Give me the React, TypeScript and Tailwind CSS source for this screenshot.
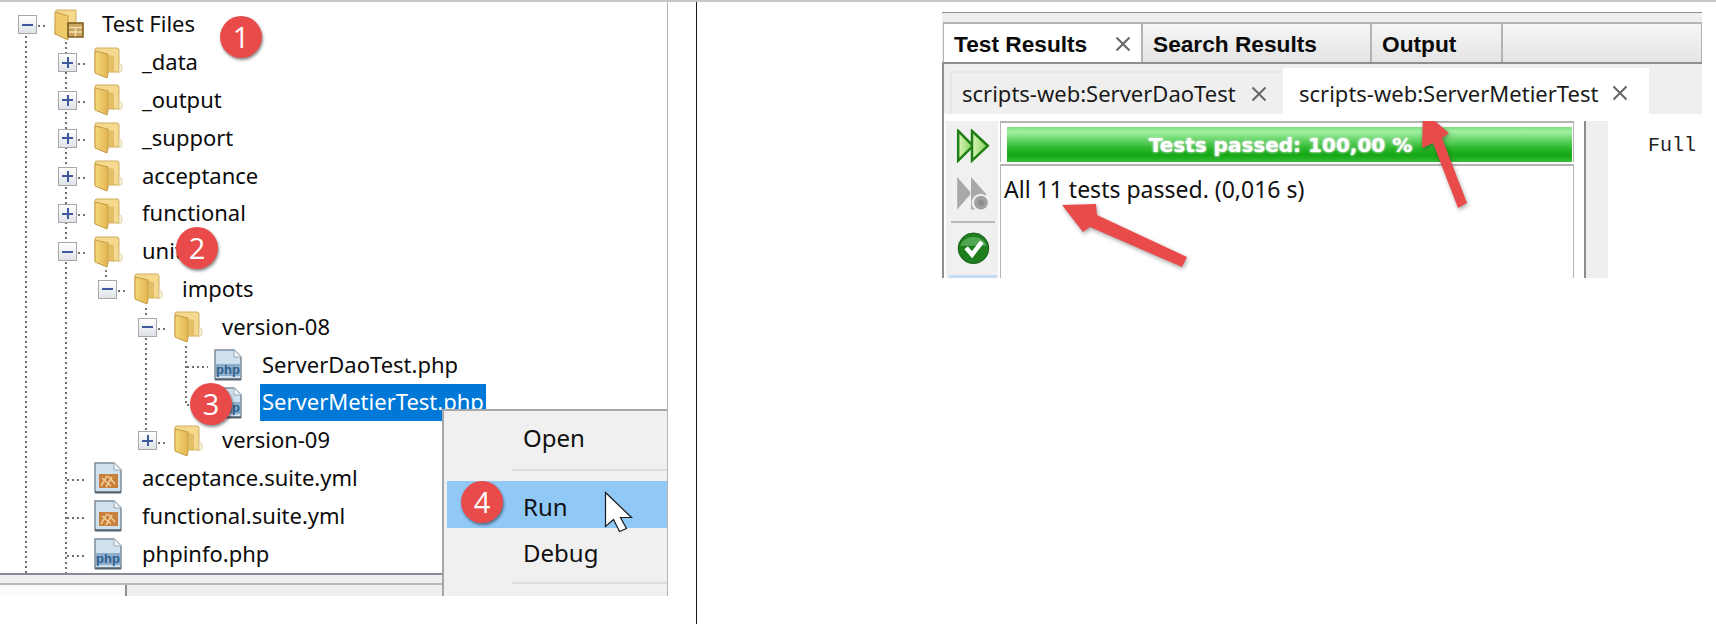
import { useId } from "react"

type TreeRow = {
	label: string
	depth: number
	icon: "root" | "folder" | "php" | "yml"
	expander?: "plus" | "minus"
	selected?: boolean
}

const rows: TreeRow[] = [
	{ label: "Test Files", depth: 0, icon: "root", expander: "minus" },
	{ label: "_data", depth: 1, icon: "folder", expander: "plus" },
	{ label: "_output", depth: 1, icon: "folder", expander: "plus" },
	{ label: "_support", depth: 1, icon: "folder", expander: "plus" },
	{ label: "acceptance", depth: 1, icon: "folder", expander: "plus" },
	{ label: "functional", depth: 1, icon: "folder", expander: "plus" },
	{ label: "unit", depth: 1, icon: "folder", expander: "minus" },
	{ label: "impots", depth: 2, icon: "folder", expander: "minus" },
	{ label: "version-08", depth: 3, icon: "folder", expander: "minus" },
	{ label: "ServerDaoTest.php", depth: 4, icon: "php" },
	{ label: "ServerMetierTest.php", depth: 4, icon: "php", selected: true },
	{ label: "version-09", depth: 3, icon: "folder", expander: "plus" },
	{ label: "acceptance.suite.yml", depth: 1, icon: "yml" },
	{ label: "functional.suite.yml", depth: 1, icon: "yml" },
	{ label: "phpinfo.php", depth: 1, icon: "php" },
]

const depthPadding = ["pl-[18px]", "pl-[58px]", "pl-[98px]", "pl-[138px]", "pl-[178px]"]

function Folder() {
	const id = useId()
	return (
		<svg width="30" height="32" viewBox="0 0 30 32">
			<defs>
				<linearGradient id={id} x1="0" y1="0" x2="1" y2="0">
					<stop offset="0" stopColor="#f6d87c" />
					<stop offset="1" stopColor="#e2b552" />
				</linearGradient>
			</defs>
			<path d="M2 1h21a2 2 0 0 1 2 2v22H1V2z" fill="#f4d98e" stroke="#cfae62" />
			<path d="M25 16l3 3v5l-3 2z" fill="#f8f2dc" stroke="#d8c486" strokeWidth="0.7" />
			<path d="M1 4l13 3v20l-1 4-12-5z" fill={`url(#${id})`} stroke="#c49a42" />
			<path d="M14 8l6 1v16h-6z" fill="#dfb458" opacity="0.75" />
		</svg>
	)
}

function RootFolder() {
	return (
		<svg width="30" height="32" viewBox="0 0 30 32">
			<path d="M2 1h20v24H1z" fill="#f4d98e" stroke="#cfae62" />
			<path d="M1 3l13 4v24l-13-6z" fill="#f0cb6c" stroke="#c49a42" />
			<rect x="14" y="14" width="15" height="14" fill="#c9a560" stroke="#7d5a1c" strokeWidth="1.5" />
			<path d="M15 18.5h13M15 23h13M21.5 18.5v9" stroke="#f1e1b0" strokeWidth="1.5" />
		</svg>
	)
}

function FileIcon({ kind }: { kind: "php" | "yml" }) {
	return (
		<svg width="28" height="32" viewBox="0 0 28 32">
			<path d="M1 1h19l7 7v22H1z" fill="#cfe0ee" stroke="#7d8b99" strokeWidth="1.5" />
			<path d="M20 1v7h7" fill="#f0f4f8" stroke="#9aa8b4" />
			<path d="M1 30.5h26" stroke="#56626e" strokeWidth="2" />
			{kind === "php" ? (
				<>
					<rect x="2" y="15" width="24" height="12" fill="#8eaecb" />
					<text x="14" y="25" textAnchor="middle" fontSize="13" fontWeight="700" fill="#2f5f8f" fontFamily="'Liberation Sans', sans-serif">
						php
					</text>
				</>
			) : (
				<>
					<rect x="5" y="12" width="19" height="14" fill="#c8803a" />
					<path d="M7 24l6-10M12 25l6-10M8 16l9 8M14 14l7 8" stroke="#f0cc98" strokeWidth="1.5" />
				</>
			)}
		</svg>
	)
}

function Expander({ type }: { type: "plus" | "minus" }) {
	return (
		<div className="relative flex h-[19px] w-[19px] items-center justify-center border border-[#a8a8a8] bg-[linear-gradient(#ffffff,#dfe2e8)]">
			<div className="h-[2px] w-[11px] bg-[#3f5a9c]" />
			{type === "plus" ? <div className="absolute h-[11px] w-[2px] bg-[#3f5a9c]" /> : null}
		</div>
	)
}

function Row({ row }: { row: TreeRow }) {
	return (
		<div className={`flex h-[37.8px] items-center ${depthPadding[row.depth]}`}>
			<div className="flex w-[36px] shrink-0">{row.expander ? <Expander type={row.expander} /> : null}</div>
			<div className="flex w-[48px] shrink-0">
				{row.icon === "root" ? <RootFolder /> : row.icon === "folder" ? <Folder /> : <FileIcon kind={row.icon} />}
			</div>
			<span
				className={
					row.selected
						? "flex h-[37px] items-center bg-[#0078d7] px-[2px] pb-[2px] -ml-[2px] text-white"
						: "pb-[2px] text-[#0c0c0c]"
				}
			>
				{row.label}
			</span>
		</div>
	)
}

function TreeLines() {
	const dots = { stroke: "#707070", strokeWidth: 2, strokeDasharray: "2 3" }
	const horizontal = [
		[38, 48, 24],
		[78, 88, 62],
		[78, 88, 100],
		[78, 88, 138],
		[78, 88, 176],
		[78, 88, 213],
		[78, 88, 251],
		[118, 128, 289],
		[158, 168, 327],
		[187, 208, 365],
		[187, 208, 403],
		[158, 168, 441],
		[67, 86, 478],
		[67, 86, 516],
		[67, 86, 554],
	]
	return (
		<svg className="absolute left-0 top-0" width="300" height="574">
			<line x1="26" y1="34" x2="26" y2="572" {...dots} />
			<line x1="66" y1="40" x2="66" y2="572" {...dots} />
			<line x1="106" y1="268" x2="106" y2="280" {...dots} />
			<line x1="146" y1="306" x2="146" y2="440" {...dots} />
			<line x1="186" y1="344" x2="186" y2="403" {...dots} />
			{horizontal.map(([x1, x2, y]) => (
				<line key={`${x1}-${y}`} x1={x1} y1={y} x2={x2} y2={y} {...dots} />
			))}
		</svg>
	)
}

function Badge({ n, className }: { n: number; className: string }) {
	return (
		<div
			className={`absolute flex h-[42px] w-[42px] items-center justify-center rounded-full bg-[#e94b4b] text-[29px] text-white shadow-[1px_2px_3px_rgba(0,0,0,0.45)] font-['Open_Sans',sans-serif] ${className}`}
		>
			{n}
		</div>
	)
}

function ContextMenu() {
	return (
		<div className="absolute left-[442px] top-[407px] flex h-[187px] w-[226px] flex-col border-l-2 border-r border-t-2 border-[#a6a6a6] border-r-[#b4b4b4] bg-[#f0f0f0] text-[24px] text-[#111111] font-['Noto_Sans',sans-serif]">
			<div className="flex h-[58px] items-center pb-[4px] pl-[79px]">Open</div>
			<div className="ml-[68px] h-[2px] bg-[#dcdcdc]" />
			<div className="h-[10px]" />
			<div className="ml-[3px] flex h-[47px] items-center bg-[#90c8f6] pl-[76px] pt-[4px]">Run</div>
			<div className="flex h-[46px] items-center pl-[79px] pt-[3px]">Debug</div>
			<div className="ml-[68px] mt-[8px] h-[2px] bg-[#dcdcdc]" />
		</div>
	)
}

function Cursor() {
	return (
		<svg className="absolute left-[603px] top-[488px]" width="32" height="44" viewBox="0 0 32 44">
			<path d="M2.5 2.5v34l8-7 6 12 7-3-6-11h11z" fill="#ffffff" stroke="#1a1a1a" strokeWidth="1.2" />
		</svg>
	)
}

function RedArrows() {
	return (
		<svg className="absolute -top-[2px] left-0 drop-shadow-[1px_2px_2px_rgba(0,0,0,0.35)]" width="1716" height="624">
			<path d="M1062 205L1096 204L1097 215L1187 257L1182 267L1090 227L1083 232z" fill="#e94b4b" />
			<path d="M1423 111L1449 133L1442 138L1467 203L1458 208L1433 143L1422 148z" fill="#e94b4b" />
		</svg>
	)
}

function CloseX({ className }: { className?: string }) {
	return (
		<svg className={className} width="16" height="16" viewBox="0 0 16 16">
			<path d="M1.5 1.5l13 13M14.5 1.5l-13 13" stroke="#666666" strokeWidth="2" />
		</svg>
	)
}

function ToolbarIcons() {
	const id = useId()
	return (
		<div className="ml-[2px] flex w-[52px] flex-col items-center bg-[#f0f0f0] pl-[2px] pt-[8px]">
			<svg width="34" height="34" viewBox="0 0 34 34">
				<defs>
					<linearGradient id={id} x1="0" y1="0" x2="1" y2="0">
						<stop offset="0" stopColor="#d8f5b8" />
						<stop offset="1" stopColor="#84d054" />
					</linearGradient>
				</defs>
				<path d="M2 2l15 15-15 15z" fill={`url(#${id})`} stroke="#1f7f14" strokeWidth="2.5" />
				<path d="M16 2l16 15-16 15z" fill={`url(#${id})`} stroke="#1f7f14" strokeWidth="2.5" />
			</svg>
			<svg className="mt-[13px]" width="34" height="36" viewBox="0 0 34 36">
				<path d="M1 1l13 15v3l-13 15z" fill="#a8a8a8" />
				<path d="M15 1l15 17v2a8 8 0 0 0-11 14h-4z" fill="#a8a8a8" />
				<circle cx="25" cy="27" r="7" fill="#a0a0a0" />
				<circle cx="25" cy="27" r="3" fill="#8c8c8c" />
			</svg>
			<div className="mt-[10px] h-[2px] w-[44px] bg-[#b8b8b8]" />
			<svg className="mt-[9px]" width="33" height="33" viewBox="0 0 33 33">
				<circle cx="16.5" cy="16.5" r="15.5" fill="#1f7f1f" stroke="#165c16" />
				<path d="M3 14a14 12 0 0 1 27 0z" fill="#66b866" opacity="0.7" />
				<path d="M9 16l6 7 10-13" fill="none" stroke="#ffffff" strokeWidth="4.5" />
			</svg>
			<div className="mt-[10px] h-[3px] w-[48px] bg-[#c6dcf2]" />
		</div>
	)
}

function ResultsPanel() {
	const tabClass =
		"flex h-full shrink-0 items-center justify-between border-x border-t-2 border-[#b4b4b4] bg-[linear-gradient(#f6f6f6,#e4e4e4)] pl-[10px] pr-[10px] pt-[3px]"
	return (
		<div className="ml-[245px] mt-[10px] flex h-[266px] w-[760px] flex-col border-t border-[#8f8f8f] bg-[#efefef]">
			<div className="mt-[9px] flex h-[42px] border-b-2 border-[#8f8f8f] pl-px text-[22.7px] font-bold text-[#0a0a0a] font-['Liberation_Sans',sans-serif]">
				<div className={`${tabClass} w-[199px] bg-none bg-white`}>
					<span>Test Results</span>
					<CloseX />
				</div>
				<div className={`${tabClass} w-[229px]`}>Search Results</div>
				<div className={`${tabClass} w-[131px]`}>Output</div>
				<div className={`${tabClass} grow`} />
			</div>
			<div className="flex h-[51px] items-end border-l-2 border-[#8f8f8f] pl-[6px] text-[22px] text-[#1a1a1a] font-['Noto_Sans',sans-serif]">
				<div className="flex h-[43px] w-[333px] shrink-0 items-center justify-between border-l-2 border-t-2 border-[#e6e6e6] pl-[10px] pr-[16px]">
					<span>scripts-web:ServerDaoTest</span>
					<CloseX />
				</div>
				<div className="relative z-10 -mb-[7px] flex h-[53px] w-[366px] shrink-0 items-center justify-between bg-white pb-[3px] pl-[16px] pr-[21px]">
					<span>scripts-web:ServerMetierTest</span>
					<CloseX />
				</div>
			</div>
			<div className="flex min-h-0 grow border-l-2 border-[#8f8f8f] bg-white">
				<div className="mt-[7px] flex w-[56px] shrink-0 overflow-hidden">
					<ToolbarIcons />
				</div>
				<div className="flex w-[574px] shrink-0 flex-col pt-[7px]">
					<div className="h-[41px] border-x border-t-2 border-[#b4b4b4] pl-[6px] pr-px pt-[4px]">
						<div className="flex h-[35px] items-center justify-center bg-[linear-gradient(#7fe07f,#a2f0a2_14%,#5ed05e_40%,#2cb82c_60%,#14a614_80%,#35bd35)] pr-[18px] text-[20px] font-bold text-white [text-shadow:0_0_2px_#cfe6cf,0_0_3px_#cfe6cf] font-['DejaVu_Sans',sans-serif]">
							Tests passed: 100,00 %
						</div>
					</div>
					<div className="mt-[2px] grow border-x border-t-2 border-[#b4b4b4] pl-[3px] pt-[8px] text-[23px] leading-[30px] text-[#111111] font-['Noto_Sans',sans-serif]">
						All 11 tests passed. (0,016 s)
					</div>
				</div>
				<div className="mt-[7px] flex w-[34px] shrink-0 pl-[10px]">
					<div className="grow border-l-2 border-[#8c8c8c] bg-[#efefef]" />
				</div>
				<div className="grow pl-[40px] pt-[17px] text-[20px] leading-[30px] text-[#222222] font-['Liberation_Mono',monospace]">
					Full
				</div>
			</div>
		</div>
	)
}

export default function App() {
	return (
		<div className="relative h-[624px] w-[1716px] overflow-hidden border-t-2 border-[#c8c8c8] bg-white">
			<div className="flex h-full">
				<div className="flex h-[594px] w-[668px] shrink-0 flex-col border-r border-[#b4b4b4]">
					<div className="relative h-[571px] overflow-hidden pt-[4px] text-[22px] font-['Noto_Sans',sans-serif]">
						<TreeLines />
						<div className="relative">
							{rows.map((row) => (
								<Row key={row.label} row={row} />
							))}
						</div>
					</div>
					<div className="h-[2px] bg-[#8b8b97]" />
					<div className="h-[8px] bg-[#f0f0f0]" />
					<div className="h-[2px] bg-[#b8b8b8]" />
					<div className="flex grow">
						<div className="w-[127px] border-r-2 border-[#8f8f8f] bg-[#fafafa]" />
						<div className="grow bg-[#eeeeee]" />
					</div>
				</div>
				<div className="ml-[28px] w-px shrink-0 bg-[#1a1a1a]" />
				<ResultsPanel />
			</div>
			<ContextMenu />
			<Cursor />
			<RedArrows />
			<Badge n={1} className="left-[220px] top-[14px]" />
			<Badge n={2} className="left-[176px] top-[225px]" />
			<Badge n={3} className="left-[190px] top-[381px]" />
			<Badge n={4} className="left-[461px] top-[479px]" />
		</div>
	)
}
